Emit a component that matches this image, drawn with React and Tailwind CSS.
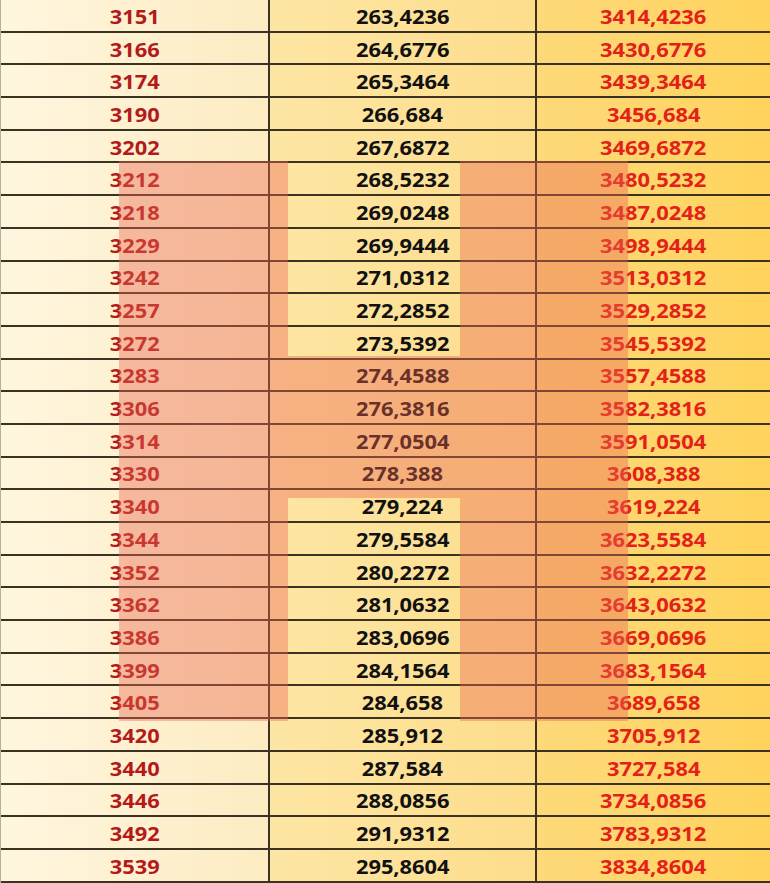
import React from 'react';

// Tabla de valores: base, 8,36 % y total
const rows = [
  ['3151', '263,4236', '3414,4236'],
  ['3166', '264,6776', '3430,6776'],
  ['3174', '265,3464', '3439,3464'],
  ['3190', '266,684', '3456,684'],
  ['3202', '267,6872', '3469,6872'],
  ['3212', '268,5232', '3480,5232'],
  ['3218', '269,0248', '3487,0248'],
  ['3229', '269,9444', '3498,9444'],
  ['3242', '271,0312', '3513,0312'],
  ['3257', '272,2852', '3529,2852'],
  ['3272', '273,5392', '3545,5392'],
  ['3283', '274,4588', '3557,4588'],
  ['3306', '276,3816', '3582,3816'],
  ['3314', '277,0504', '3591,0504'],
  ['3330', '278,388', '3608,388'],
  ['3340', '279,224', '3619,224'],
  ['3344', '279,5584', '3623,5584'],
  ['3352', '280,2272', '3632,2272'],
  ['3362', '281,0632', '3643,0632'],
  ['3386', '283,0696', '3669,0696'],
  ['3399', '284,1564', '3683,1564'],
  ['3405', '284,658', '3689,658'],
  ['3420', '285,912', '3705,912'],
  ['3440', '287,584', '3727,584'],
  ['3446', '288,0856', '3734,0856'],
  ['3492', '291,9312', '3783,9312'],
  ['3539', '295,8604', '3834,8604'],
];

function Cell({ children, className }) {
  return (
    <div className={`flex items-center justify-center pt-[4px] ${className}`}>
      <span className="inline-block scale-x-[1.15] font-bold text-[19px] leading-none">
        {children}
      </span>
    </div>
  );
}

export default function App() {
  return (
    <div
      className="relative w-[770px] h-[883px] overflow-hidden border-l border-[#b9ae98] bg-[#fff6de]"
      style={{ fontFamily: '"Open Sans", "Noto Sans", sans-serif' }}
    >
      {rows.map(([a, b, c]) => (
        <div
          key={a}
          className="grid grid-cols-[269px_267px_1fr] h-[32.7px] border-b-2 border-[#3b3222]"
        >
          <Cell className="border-r-2 border-[#3b3222] bg-linear-to-r from-[#fff6df] to-[#fdecc2] text-[#b31b1b]">
            {a}
          </Cell>
          <Cell className="border-r-2 border-[#3b3222] bg-linear-to-r from-[#fde6a4] to-[#fddd8b] text-[#111111]">
            {b}
          </Cell>
          <Cell className="bg-linear-to-r from-[#fdd97a] to-[#ffd35b] text-[#e2221a]">
            {c}
          </Cell>
        </div>
      ))}

      {/* marca de agua "H" */}
      <div className="pointer-events-none absolute left-[118px] top-[161px] w-[169px] h-[560px] bg-[#ec6450]/40" />
      <div className="pointer-events-none absolute left-[287px] top-[356px] w-[172px] h-[142px] bg-[#ec6450]/40" />
      <div className="pointer-events-none absolute left-[459px] top-[161px] w-[168px] h-[560px] bg-[#ec6450]/40" />
    </div>
  );
}
